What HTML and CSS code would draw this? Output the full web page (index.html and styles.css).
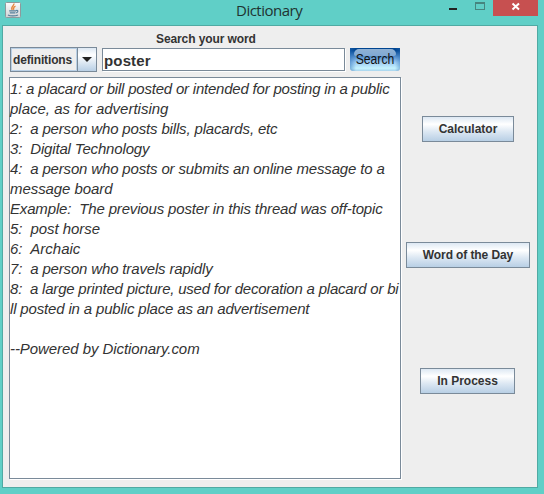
FILE: index.html
```
<!DOCTYPE html>
<html lang="en">
<head>
<meta charset="utf-8">
<title>Dictionary</title>
<link rel="stylesheet" href="styles.css">
</head>
<body>
<div class="window">
  <header class="titlebar">
    <svg class="app-icon" width="16" height="16" viewBox="0 0 16 16">
      <defs><linearGradient id="tile" x2="0" y2="1"><stop offset="0" stop-color="#fcfcfc"/><stop offset="1" stop-color="#cfd3d6"/></linearGradient></defs>
      <rect x=".5" y=".5" width="15" height="15" rx="1" fill="url(#tile)" stroke="#8d9a9c"/>
      <path d="M8.900 1.600C9.600 3.600 5.200 4.800 7.200 7.800M10.500 4.200C7.800 5.200 8.700 6.200 8.500 7.800" fill="none" stroke="#e5843a" stroke-width="1.400"/>
      <path d="M4.200 8.800h7M4.800 10.800h5.600M3 13c2 1.300 7.500 1.200 10 0M11.200 8.500c2.400-.5 2 1.600 0 2.400" fill="none" stroke="#56809b" stroke-width="1.200"/>
    </svg>
    <h1 class="title">Dictionary</h1>
    <div class="controls">
      <svg width="35" height="16" viewBox="0 0 35 16" shape-rendering="crispEdges"><path d="M10 8h8v2h-8z" fill="#222"/></svg>
      <svg width="19" height="16" viewBox="0 0 19 16" shape-rendering="crispEdges"><path d="M1 2h10v8H1zM2 4v5h8V4z" fill="#46857f" fill-rule="evenodd"/></svg>
      <div class="close"><svg width="45" height="16" viewBox="0 0 45 16"><path d="M19.500 3.500l6.500 6M26 3.500l-6.500 6" stroke="#fff" stroke-width="2"/></svg></div>
    </div>
  </header>
  <main class="panel">
    <section class="lookup">
      <div class="label"><span>Search your word</span></div>
      <div class="searchbar">
        <div class="combo">
          <span class="combo-text">definitions</span>
          <span class="combo-arrow"><svg width="10" height="5" viewBox="0 0 10 5"><path d="M0 0h10L5 5z" fill="#222"/></svg></span>
        </div>
        <div class="field"><span>poster</span></div>
        <div class="search"><span>Search</span></div>
      </div>
      <div class="results">
        <div class="line tighter">1: a placard or bill posted or intended for posting in a public</div>
        <div class="line">place, as for advertising</div>
        <div class="line tight">2:  a person who posts bills, placards, etc</div>
        <div class="line tight">3:  Digital Technology</div>
        <div class="line tight">4:  a person who posts or submits an online message to a</div>
        <div class="line snug">message board</div>
        <div class="line tight">Example:  The previous poster in this thread was off-topic</div>
        <div class="line snug">5:  post horse</div>
        <div class="line">6:  Archaic</div>
        <div class="line tight">7:  a person who travels rapidly</div>
        <div class="line tighter">8:  a large printed picture, used for decoration a placard or bi</div>
        <div class="line tight">ll posted in a public place as an advertisement</div>
        <div class="line"> </div>
        <div class="line snug">--Powered by Dictionary.com</div>
      </div>
    </section>
    <aside class="side">
      <div class="btn calc">Calculator</div>
      <div class="btn word">Word of the Day</div>
      <div class="btn proc">In Process</div>
    </aside>
  </main>
</div>
</body>
</html>
```

FILE: styles.css
```
* { box-sizing: border-box; }
body {
  margin: 0;
  background: #60cfc7;
  color: #333;
  font: bold 12px "Liberation Sans", Arial, sans-serif;
}
.window {
  width: 544px;
  height: 494px;
  padding: 0 6px 6px 2px;
  overflow: hidden;
}
.titlebar {
  display: grid;
  grid-template-columns: 16px 1fr 99px;
  height: 25px;
  padding: 0 0 0 3px;
}
.app-icon { margin-top: 2px; }
.title {
  margin: 0 0 0 215px;
  font: 15px/21px "Open Sans", "Noto Sans", sans-serif;
  letter-spacing: -0.5px;
  color: #1f3331;
  white-space: nowrap;
}
.controls { display: flex; }
.controls svg { display: block; flex: none; }
.close { width: 45px; height: 16px; background: #c75050; }
.panel {
  display: grid;
  grid-template-columns: 394px 1fr;
  width: 536px;
  height: 463px;
  padding-left: 6px;
  background: #eee;
  border: 1px solid #50aaa3;
}
.lookup { padding-top: 6px; }
.label {
  height: 15px;
  line-height: 14px;
  padding-left: 147px;
  letter-spacing: -0.1px;
}
.searchbar {
  display: flex;
  height: 25px;
  padding-left: 1px;
}
.combo {
  display: flex;
  width: 87px;
  height: 25px;
  border: 1px solid #7a8a99;
}
.combo-text {
  width: 66px;
  line-height: 22px;
  padding-left: 1px;
  letter-spacing: -0.15px;
  border: 1px solid #b8cfe5;
}
.combo-arrow {
  display: flex;
  flex: 1;
  align-items: center;
  justify-content: center;
  border-left: 1px solid #7a8a99;
  background: linear-gradient(#dde8f3, #fff 30%, #b8cfe5);
}
.field {
  width: 243px;
  height: 23px;
  margin: 1px 0 0 5px;
  padding-left: 1px;
  border: 1px solid #7a8a99;
  background: #fff;
  box-shadow: 1px 1px 0 #fff;
  font-size: 15px;
  letter-spacing: 0.15px;
  line-height: 24px;
}
.search {
  width: 50px;
  height: 23px;
  margin: 1px 0 0 5px;
  padding: 1px 4px 0;
  border-radius: 0 0 3px 3px;
  background:
    linear-gradient(90deg, rgba(40, 110, 185, .5), transparent 12% 90%, rgba(40, 110, 185, .4)),
    linear-gradient(#004591 0 12%, #5a94cf 40%, #9ccaf1 62%, #c5f3ff 88%, #a9d4ed);
  color: #111;
  font-size: 14px;
  font-weight: normal;
  line-height: 21px;
  text-align: center;
}
.search::before {
  content: "";
  display: block;
  height: 7px;
  margin-bottom: -7px;
  border-radius: 5px 5px 2px 2px;
  background: linear-gradient(#8fb1d4, #7fa9d4);
}
.search span {
  display: block;
  width: 46px;
  margin-left: -2px;
  transform: scaleX(.87);
}
.results {
  width: 392px;
  height: 402px;
  margin-top: 5px;
  padding-top: 1px;
  border: 1px solid #7a8a99;
  background: #fff;
  box-shadow: 1px 1px 0 #fff;
  font: italic 15px/20px "Liberation Sans", Arial, sans-serif;
}
.line { height: 20px; white-space: pre; }
.snug { letter-spacing: -0.07px; }
.tight { letter-spacing: -0.16px; }
.tighter { letter-spacing: -0.21px; }
.side {
  display: flex;
  flex-direction: column;
  padding-top: 90px;
  gap: 100px;
}
.btn {
  height: 26px;
  border: 1px solid #7a8a99;
  background: linear-gradient(#dde8f3, #fff 30%, #dde8f3 60%, #b8cfe5);
  line-height: 25px;
  text-align: center;
}
.calc { width: 92px; margin-left: 19px; }
.word { width: 124px; margin-left: 3px; letter-spacing: -0.1px; }
.proc { width: 95px; margin-left: 17px; }
```
